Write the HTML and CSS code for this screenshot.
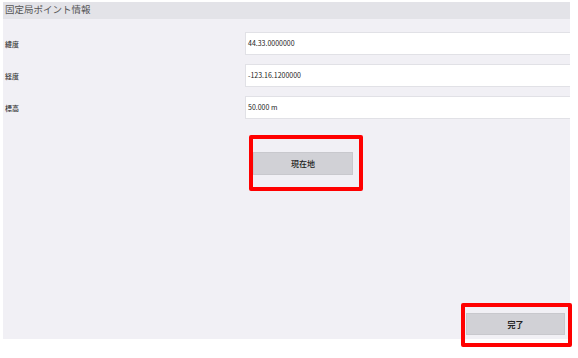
FILE: index.html
```html
<!DOCTYPE html>
<html lang="ja">
<head>
  <meta charset="UTF-8" />
  <title>固定局ポイント情報</title>
  <link rel="stylesheet" href="styles.css">
</head>
<body>
  <div class="panel">
    <div class="panel-header">固定局ポイント情報</div>

    <div class="form">
      <label>緯度</label>
      <div class="field">44.33.0000000</div>

      <label>経度</label>
      <div class="field">-123.16.1200000</div>

      <label>標高</label>
      <div class="field">50.000 m</div>
    </div>

    <div class="locate-row">
      <div class="marked locate-mark">
        <button class="btn">現在地</button>
      </div>
    </div>

    <div class="footer">
      <div class="marked done-mark">
        <button class="btn">完了</button>
      </div>
    </div>
  </div>
</body>
</html>
```

FILE: styles.css
```css
:root {
  --panel-bg: #f1f0f5;
  --header-bg: #e3e3e8;
  --btn-bg: #d1d1d6;
  --mark: #ff0000;
}

html {
  height: 100%;
}

body {
  margin: 0;
  min-height: 358px;
  padding-top: 2px;
  box-sizing: border-box;
  background-color: #ffffff;
  font-family: "Noto Sans CJK JP", "Noto Sans", sans-serif;
  color: #222;
}

.panel {
  margin-left: 3px;
  width: 567px;
  height: 337px;
  background-color: var(--panel-bg);
  display: flex;
  flex-direction: column;
}

.panel-header {
  height: 17px;
  line-height: 15px;
  padding-left: 2px;
  background-color: var(--header-bg);
  color: #555;
  font-size: 9.5px;
}

.form {
  display: grid;
  grid-template-columns: 242px 1fr;
  row-gap: 9px;
  margin-top: 13px;
  align-items: center;
}

.form label {
  padding-left: 2px;
  font-size: 7px;
  font-weight: 500;
  color: #333;
}

.field {
  height: 21px;
  line-height: 21px;
  padding-left: 2px;
  background-color: #ffffff;
  border: 1px solid #e1e1e6;
  border-right: none;
  font-size: 7px;
}

.locate-row {
  display: flex;
  padding-left: 250px;
  margin-top: 33px;
}

.btn {
  width: 100px;
  height: 23px;
  border: 1px solid #c8c8cd;
  background-color: var(--btn-bg);
  font-family: inherit;
  font-size: 8px;
  font-weight: 500;
  color: #222;
  padding: 0;
}

.footer {
  margin-top: auto;
  display: flex;
  justify-content: flex-end;
  padding: 0 5px 4px 0;
}

.done-mark .btn {
  width: 99px;
  height: 22px;
  font-weight: 600;
}

.marked {
  position: relative;
  display: flex;
}

.marked::after {
  content: "";
  position: absolute;
  border: 4px solid var(--mark);
  border-radius: 2px;
}

.locate-mark::after {
  left: -4px;
  top: -17px;
  right: -10px;
  bottom: -16px;
}

.done-mark::after {
  left: -5px;
  top: -10px;
  right: -7px;
  bottom: -12px;
}
```
